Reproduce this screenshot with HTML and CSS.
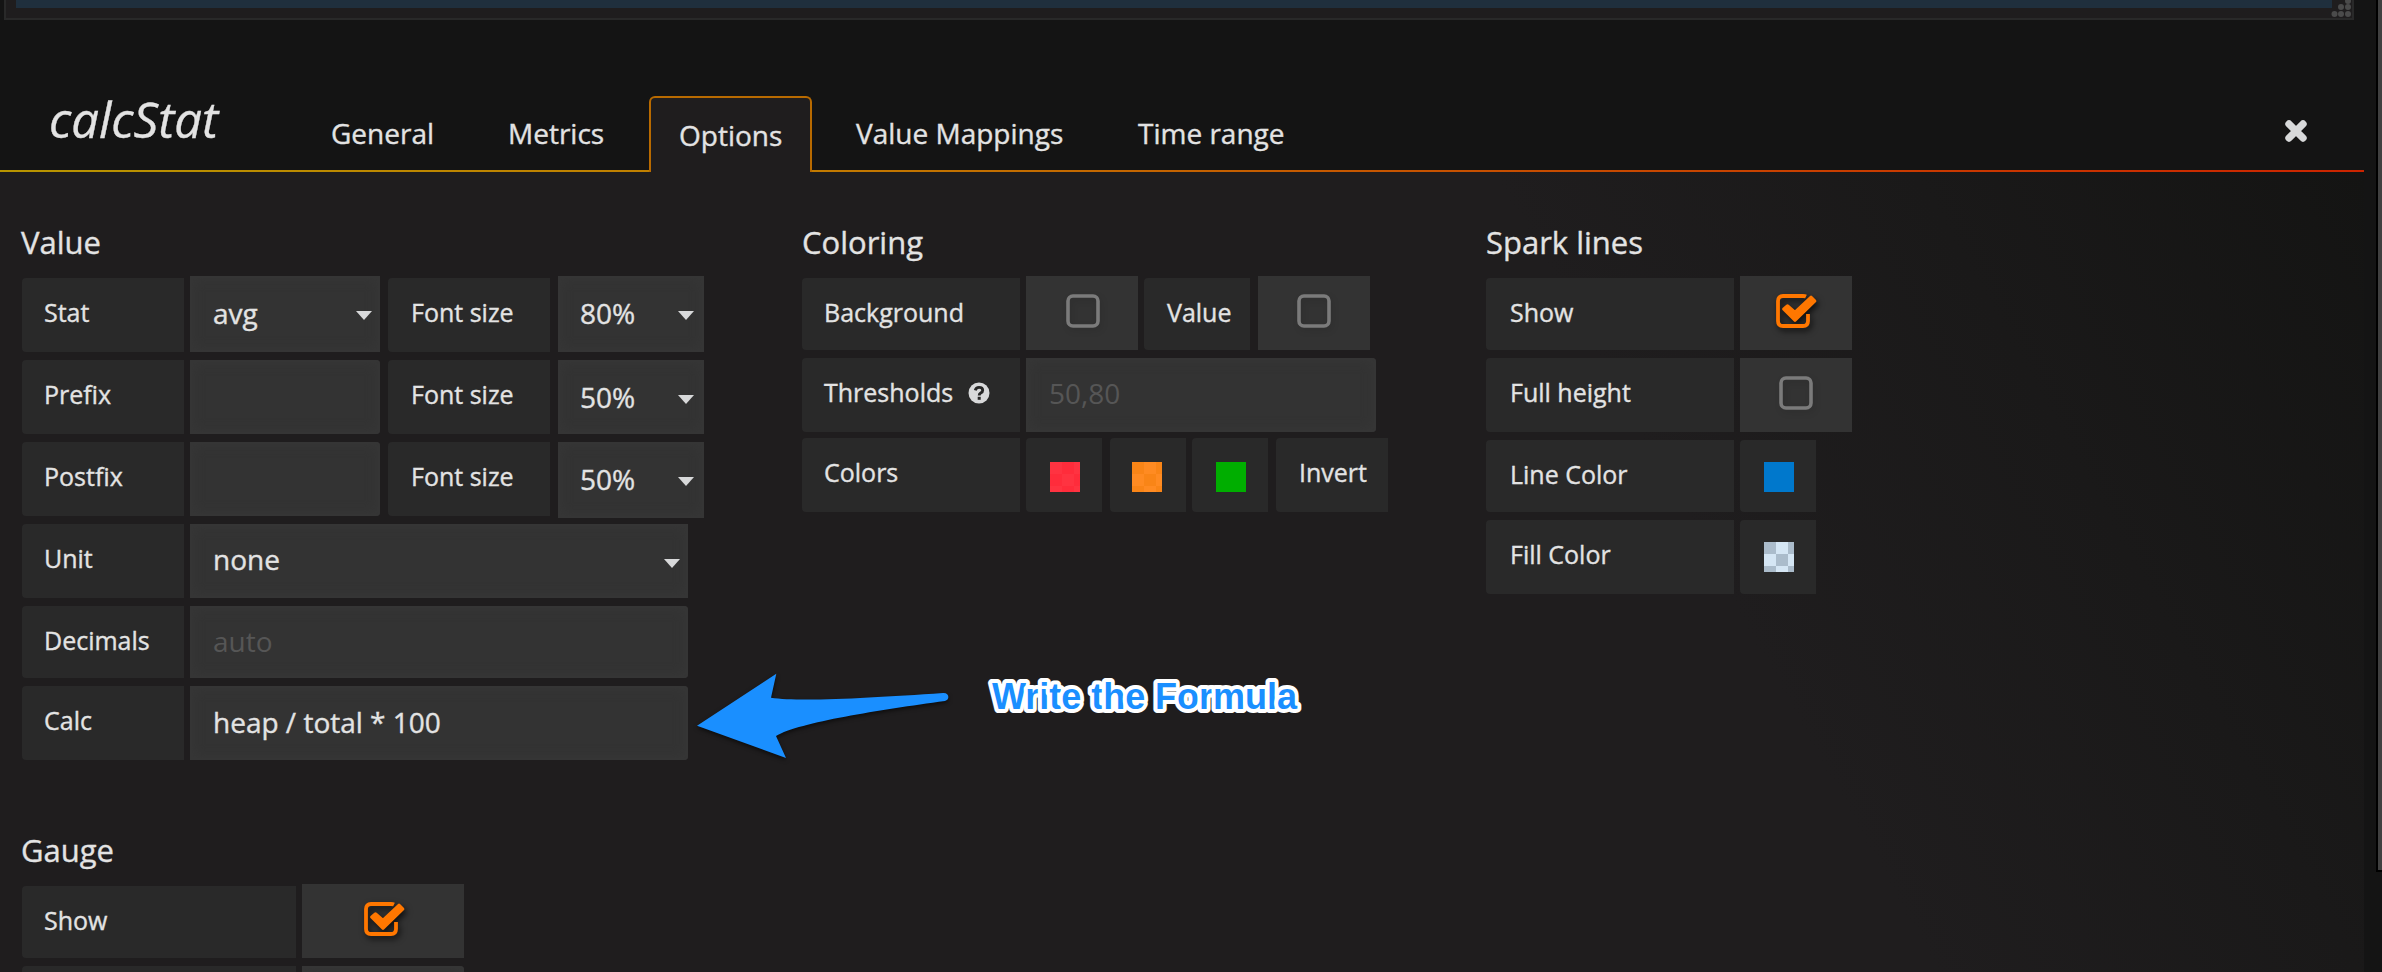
FILE: index.html
```
<!DOCTYPE html>
<html lang="en">
<head>
<meta charset="utf-8">
<title>calcStat</title>
<link rel="stylesheet" href="styles.css">
</head>
<body>
<svg class="defs" width="0" height="0">
  <symbol id="box" viewBox="0 0 42 34"><rect x="2" y="2" width="30" height="30" rx="5" fill="none" stroke="#7b7b7b" stroke-width="3.6"/></symbol>
  <symbol id="checked" viewBox="0 0 42 34"><path d="M30 2.500Q29 2 27 2H7Q2 2 2 7V27Q2 32 7 32H27Q32 32 32 27V20" fill="none" stroke="#f70" stroke-width="3.8"/><path d="M8 15L11.500 12L19 18.500L35 3.500L38.500 7L19 26Z" fill="#f70" stroke="#f70" stroke-width="3.600" stroke-linejoin="round"/></symbol>
</svg>
<div class="viewport">
  <div class="graph"><div class="series"></div>
    <svg class="grip" width="22" height="18" fill="#4b4b4b"><circle cx="17" cy="1" r="3"/><circle cx="10" cy="7" r="3"/><circle cx="17" cy="7" r="3"/><circle cx="3.500" cy="14" r="3"/><circle cx="10" cy="14" r="3"/><circle cx="17" cy="14" r="3"/></svg>
  </div>
  <header class="bar">
    <h1 class="title">calcStat</h1>
    <nav class="tabs">
      <a class="tab general">General</a>
      <a class="tab metrics">Metrics</a>
      <a class="tab active">Options</a>
      <a class="tab mappings">Value Mappings</a>
      <a class="tab">Time range</a>
    </nav>
    <svg class="close" width="24" height="24" viewBox="0 0 24 24"><path d="M5 5L19 19M19 5L5 19" stroke="#d8d9da" stroke-width="7.400" stroke-linecap="round"/></svg>
  </header>
  <div class="rule"></div>
  <main class="editor">
    <div class="sections">
      <section class="sec value">
        <h2>Value</h2>
        <div class="row"><span class="label w162">Stat</span><span class="input select w190 up avg">avg</span><span class="label w162 gap8">Font size</span><span class="input select w146 up gap8">80%</span></div>
        <div class="row r82"><span class="label w162">Prefix</span><span class="input w190"></span><span class="label w162 gap8">Font size</span><span class="input select w146 gap8">50%</span></div>
        <div class="row r82"><span class="label w162">Postfix</span><span class="input w190"></span><span class="label w162 gap8">Font size</span><span class="input select w146 tall gap8">50%</span></div>
        <div class="row r82"><span class="label w162">Unit</span><span class="input select w498 unit">none</span></div>
        <div class="row r80"><span class="label w162 h72">Decimals</span><span class="input w498 h72 dim">auto</span></div>
        <div class="row r82"><span class="label w162">Calc</span><span class="input w498 calc">heap / total * 100</span></div>
      </section>
      <section class="sec coloring">
        <h2>Coloring</h2>
        <div class="row r80 first"><span class="label w218">Background</span><span class="cell up bg"><svg class="check"><use href="#box"/></svg></span><span class="label w106">Value</span><span class="cell up gap8"><svg class="check"><use href="#box"/></svg></span></div>
        <div class="row r80"><span class="label w218 h74">Thresholds<svg class="help" width="22" height="22" viewBox="0 0 22 22"><circle cx="11" cy="11" r="10.500" fill="#d8d9da"/><path d="M7.300 8.300Q8 5.400 11 5.400Q14.700 5.400 14.700 8.300Q14.700 10 12.700 11Q11.200 11.800 11.200 13.400" fill="none" stroke="#262626" stroke-width="2.900"/><rect x="9.700" y="14.800" width="3" height="3" fill="#262626"/></svg></span><span class="input w350 h74 dim thr">50,80</span></div>
        <div class="row"><span class="label w218 h74">Colors</span><span class="swatch-cell h74"><i class="swatch red"></i></span><span class="swatch-cell h74 gap8"><i class="swatch orange"></i></span><span class="swatch-cell h74"><i class="swatch green"></i></span><span class="label invert h74 gap8">Invert</span></div>
      </section>
      <section class="sec spark">
        <h2>Spark lines</h2>
        <div class="row r80 first"><span class="label w248">Show</span><span class="cell up"><svg class="check on"><use href="#checked"/></svg></span></div>
        <div class="row r82"><span class="label w248 h74">Full height</span><span class="cell"><svg class="check"><use href="#box"/></svg></span></div>
        <div class="row r80"><span class="label w248">Line Color</span><span class="swatch-cell"><i class="swatch blue"></i></span></div>
        <div class="row"><span class="label w248 h74">Fill Color</span><span class="swatch-cell h74"><i class="swatch clear"></i></span></div>
      </section>
    </div>
    <section class="sec gauge">
      <h2>Gauge</h2>
      <div class="row r80 first"><span class="label w274">Show</span><span class="cell wide up"><svg class="check on"><use href="#checked"/></svg></span></div>
      <div class="row"><span class="label w274"></span><span class="input w162"></span></div>
    </section>
  </main>
  <svg class="note" width="640" height="110" viewBox="690 660 640 110">
    <path class="arrow" d="M697 725.700L776.300 673.700L771 697.700C800 702 870 698 943 693C949.500 692.500 950 700 945 701C880 710 800 722 776 736L786 758Z"/>
    <text class="formula" x="992" y="709" textLength="305">Write the Formula</text>
  </svg>
  <div class="scroll"><div class="thumb"></div></div>
</div>
</body>
</html>
```
FILE: styles.css
```
* { box-sizing: border-box; }
body { margin: 0; background: #141414; color: #e3e3e3; font-family: "Open Sans", "Noto Sans", sans-serif; -webkit-text-stroke: 0.35px; }
.defs { position: absolute; }
.viewport { position: relative; width: 2382px; height: 972px; overflow: hidden; }
.graph { position: relative; width: 2350px; height: 20px; margin-left: 4px; padding: 0 20px 0 10px; background: #1f1d1e; border: 2px solid #292929; border-top: 0; }
.series { height: 8px; background: #1f2f3d; }
.grip { position: absolute; right: -1px; top: 0; }
.bar { display: flex; align-items: flex-end; height: 150px; padding-left: 49px; }
.title { width: 259px; margin: 0; font-size: 49px; font-weight: 400; font-style: italic; line-height: 68px; padding-bottom: 17px; }
.tabs { display: flex; align-items: flex-end; flex: 1; font-size: 28px; }
.tab { padding: 0 23px 18px; line-height: 38px; white-space: nowrap; }
.general { width: 177px; }
.metrics { width: 164px; }
.mappings { width: 282px; margin-left: 21px; }
.active { position: relative; z-index: 1; width: 163px; height: 76px; margin-bottom: -2px; padding: 18px 0 0 28px; background: #1f1d1e; border: 2px solid #b86a00; border-bottom: 0; border-radius: 6px 6px 0 0; }
.close { margin: 0 74px 27px 0; }
.rule { width: 2364px; height: 2px; background: linear-gradient(90deg, #b89500, #c27a00 35%, #c65300 60%, #cc2400); }
.editor { width: 2364px; height: 800px; background: linear-gradient(61deg, #1f1d1e 69%, #1a1919 84%, #141413 100%); }
.sections { display: flex; height: 608px; padding-left: 22px; }
.sec h2 { margin: 0; height: 106px; padding-top: 47px; font-size: 31px; font-weight: 400; line-height: 46px; }
.value { width: 780px; }
.value h2, .gauge h2 { margin-left: -1px; }
.coloring { width: 684px; }
.spark { padding-left: 0; }
.row { display: flex; align-items: flex-start; gap: 6px; height: 82px; }
.r80 { height: 80px; }
.label { height: 72px; padding-left: 23px; background: #292929; border-radius: 4px 0 0 4px; font-size: 25px; line-height: 69px; white-space: nowrap; }
.value .label { height: 74px; padding-left: 22px; }
.value .label.gap8 { padding-left: 23px; }
.gauge .label { padding-left: 22px; }
.gap8 { margin-left: 2px; }
.input { position: relative; height: 74px; padding-left: 23px; background: #333; box-shadow: inset 0 0 0 2px #353535, inset 0 0 14px #383838; border-radius: 0 4px 4px 0; font-size: 28px; line-height: 75px; white-space: pre; }
.w146 { padding-left: 22px; }
.select { border-radius: 0; }
.select::after { content: ""; position: absolute; right: 10px; top: 35px; border: 8px solid transparent; border-top: 9px solid #d8d9da; border-bottom: 0; }
.avg::after, .unit::after { right: 8px; }
.up { margin-top: -2px; height: 76px; }
.avg, .w146.up { line-height: 74px; }
.unit { line-height: 71px; }
.calc { line-height: 72px; }
.tall { height: 76px; }
.dim { color: #565656; line-height: 71px; -webkit-text-stroke: 0; }
.cell { display: flex; width: 112px; height: 74px; background: #333; padding: 18px 0 0 39px; }
.cell.up { height: 74px; }
.cell.bg { padding-left: 40px; }
.wide { width: 162px; padding-left: 62px; }
.check { width: 42px; height: 34px; filter: drop-shadow(2px 3px 3px rgba(0,0,0,.12)); flex: none; }
.on { margin-left: -3px; filter: drop-shadow(2px 3px 3px rgba(0,0,0,.75)); }
.wide .on { margin-left: 0; }
.swatch-cell { width: 76px; height: 72px; padding: 22px 0 0 24px; background: #292929; border-radius: 4px 0 0 4px; }
.swatch { display: block; width: 30px; height: 30px; }
.coloring .swatch { margin-top: 2px; }
.red { background: repeating-conic-gradient(#ff2c3b 0 25%, #ff3341 0 50%) 0 0 / 24px 24px; }
.orange { margin-left: -2px; background: repeating-conic-gradient(#ff8b22 0 25%, #f98517 0 50%) 0 0 / 24px 24px; }
.green { background: #00ae00; }
.blue { background: #0078cc; }
.clear { background: repeating-conic-gradient(#d5e6f4 0 25%, #abbccb 0 50%) 0 0 / 24px 24px; }
.invert { width: 112px; }
.help { margin-left: 15px; vertical-align: -2px; }
.w106 { width: 106px; }
.w162 { width: 162px; }
.w190 { width: 190px; }
.w146 { width: 146px; }
.w498 { width: 498px; }
.w218 { width: 218px; padding-left: 22px; }
.w350 { width: 350px; }
.w248 { width: 248px; padding-left: 24px; }
.w274 { width: 274px; }
.sec .h74 { height: 74px; }
.sec .h72 { height: 72px; }
.gauge { padding-left: 22px; }
.note { position: absolute; left: 690px; top: 660px; -webkit-text-stroke: 0; }
.arrow { fill: #1a8fff; filter: drop-shadow(0 2px 2px rgba(0,0,0,.6)); }
.formula { font: bold 36px "Liberation Sans", Arial, sans-serif; fill: #1a8fff; stroke: #fff; stroke-width: 8px; stroke-linejoin: round; paint-order: stroke; }
.scroll { position: absolute; right: 0; top: 0; width: 6px; height: 872px; background: #000; padding: 0 0 2px 2px; }
.thumb { height: 100%; background: #404040; }
```
